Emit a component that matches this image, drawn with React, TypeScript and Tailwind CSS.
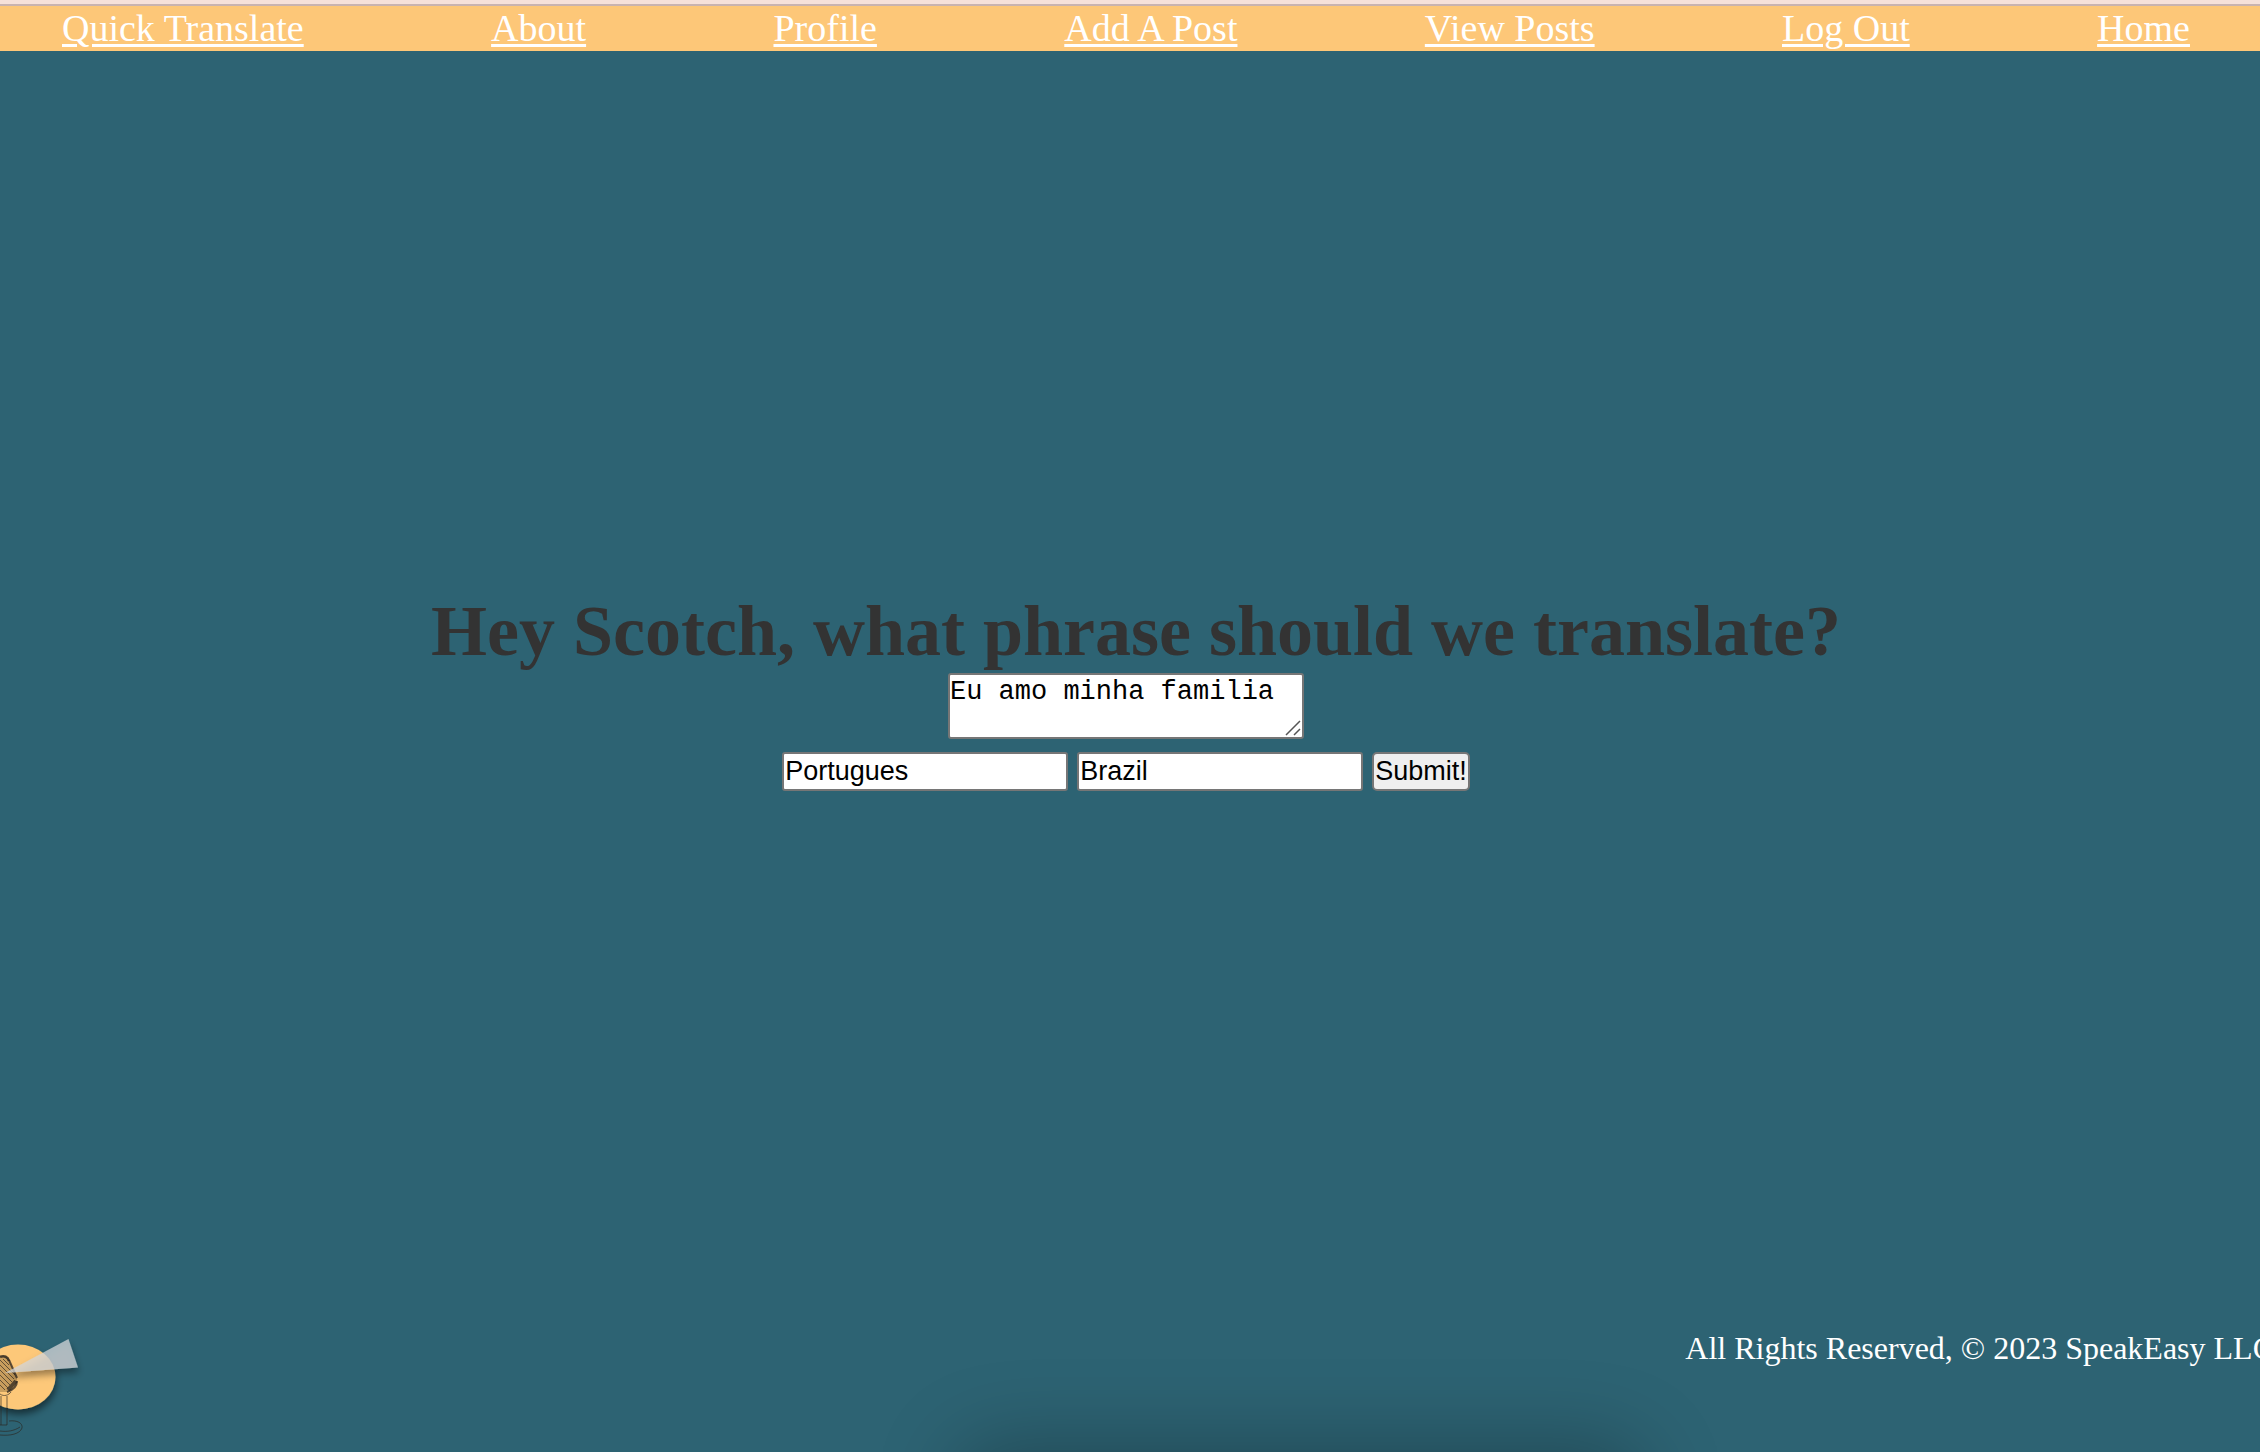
const links = ["Quick Translate", "About", "Profile", "Add A Post", "View Posts", "Log Out", "Home"];

function Logo() {
  return (
    <svg viewBox="0 0 90 120" className="h-[120px] w-[90px]" role="img" aria-label="SpeakEasy">
      <defs>
        <filter id="shade" x="-20%" y="-20%" width="150%" height="150%">
          <feDropShadow dx="1" dy="5" stdDeviation="3.5" floodColor="#000" floodOpacity="0.5" />
        </filter>
      </defs>
      <g filter="url(#shade)">
        <ellipse cx="18" cy="47" rx="37.5" ry="32.5" fill="#fdc879" />
      </g>
      <path d="M0 27C4 25 8 27 9 30L17 48C18 53 14 60 7 62H0Z" fill="#8a6a3c" fillOpacity="0.45" />
      <g fill="none" stroke="#2b2620">
        <path d="M0 27C4 25 8 27 9 31" strokeWidth="2.5" strokeOpacity="0.85" />
        <path d="M9 30L17 48M17 51C17 56 13 60 7 62" strokeWidth="2" strokeOpacity="0.75" />
        <path d="M16 51L8 60" strokeWidth="4" strokeOpacity="0.75" />
        <path d="M0 30L15 45M0 35L14 49M0 40L12 52M0 45L10 55M0 50L8 58M0 55L5 60M3 29L9 35" strokeWidth="1" strokeOpacity="0.65" />
        <path d="M0 64C4 67 9 65 11 62M1 66V95M7 66V95M0 95H7M9 91C17 90 23 93 22 98C20 104 10 106 0 105M0 101C7 102 14 101 20 97" strokeWidth="1" strokeOpacity="0.65" />
      </g>
      <g filter="url(#shade)">
        <path d="M5 43 68.500 9 78 37.500Z" fill="#d3d5d8" fillOpacity="0.75" />
      </g>
    </svg>
  );
}

export default function App() {
  return (
    <div className="flex min-h-screen flex-col overflow-hidden bg-[#2d6373] font-['Liberation_Serif',serif]">
      <div className="h-1.5 border-b-2 border-[#c9b3b0] bg-[#f6e1da]" />
      <nav className="flex h-[45px] items-center justify-between bg-[#fdc778] pr-[70px] pl-[62px] text-[38px] leading-[45px] text-white">
        {links.map((l) => (
          <a key={l} href="#" className="underline decoration-[3px] underline-offset-[3px]">{l}</a>
        ))}
      </nav>
      <main className="flex flex-1 flex-col items-center pt-[538px]">
        <h1 className="pl-3 text-[72px] leading-[84px] font-bold whitespace-nowrap text-[#333]">
          Hey Scotch, what phrase should we translate?
        </h1>
        <form className="flex flex-col items-center gap-[13px] pr-2" onSubmit={(e) => e.preventDefault()}>
          <div className="relative">
            <textarea
              aria-label="Phrase"
              defaultValue="Eu amo minha familia"
              className="block h-[66px] w-[356px] resize-none overflow-hidden rounded-[3px] border-2 border-[#767676] bg-white pt-0.5 font-['Liberation_Mono',monospace] text-[27px] leading-[30px] text-black"
            />
            <svg viewBox="0 0 16 16" className="pointer-events-none absolute right-[3px] bottom-[3px] size-4" aria-hidden="true">
              <path d="M1 15L15 1M9 15L15 9" stroke="#555" strokeWidth="1.500" fill="none" />
            </svg>
          </div>
          <div className="flex gap-[9px] font-['Liberation_Sans',sans-serif] text-[27px] leading-[31px] text-black">
            <input aria-label="Language" defaultValue="Portugues" className="h-[39px] w-[286px] rounded-[3px] border-2 border-[#767676] bg-white px-px" />
            <input aria-label="Country" defaultValue="Brazil" className="h-[39px] w-[286px] rounded-[3px] border-2 border-[#767676] bg-white px-px" />
            <button type="submit" className="h-[39px] rounded-[5px] border-2 border-[#767676] bg-[#efefef] px-px">Submit!</button>
          </div>
        </form>
      </main>
      <footer className="relative flex h-[122px] items-start justify-between">
        <Logo />
        <p className="-mr-[14px] text-[32px] leading-9 whitespace-nowrap text-white">All Rights Reserved, © 2023 SpeakEasy LLC</p>
        <div className="absolute top-full left-[975px] h-20 w-[650px] rounded-3xl shadow-[0_10px_80px_20px_rgba(0,0,0,0.25)]" />
      </footer>
    </div>
  );
}
